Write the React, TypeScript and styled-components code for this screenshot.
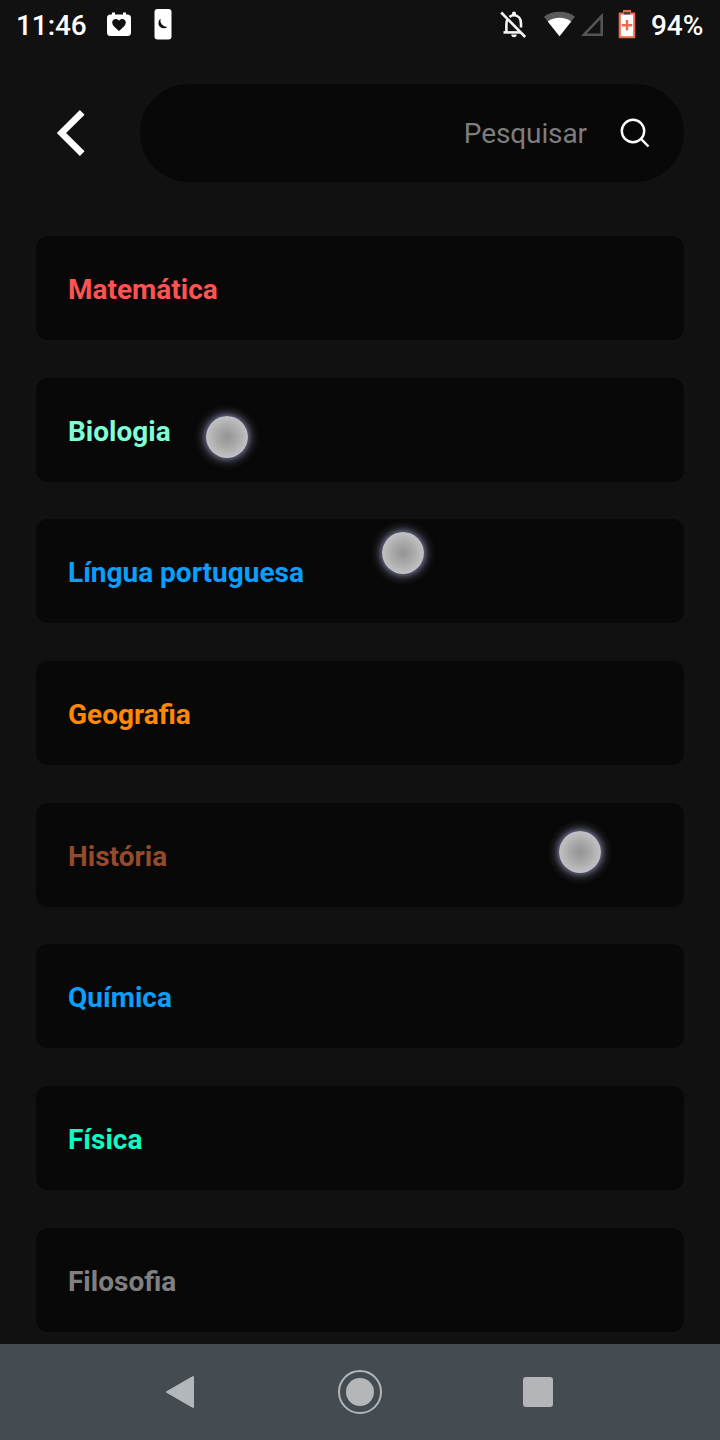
import React from 'react';
import styled, { createGlobalStyle } from 'styled-components';

const GlobalStyle = createGlobalStyle`
  * { box-sizing: border-box; }
  html, body { margin: 0; padding: 0; background: #111111; }
  body { font-family: Roboto, "Noto Sans", sans-serif; overflow: hidden; }
  svg { display: block; flex: none; }
`;

const Screen = styled.div`
  position: relative;
  display: flex;
  flex-direction: column;
  width: 720px;
  height: 1440px;
  background: #111111;
  overflow: hidden;
`;

const StatusBar = styled.header`
  display: flex;
  align-items: flex-start;
  justify-content: space-between;
  height: 48px;
  padding: 0 17px 0 16px;
  flex: none;
`;

const StatusGroup = styled.div`
  display: flex;
  align-items: flex-start;
`;

const StatusText = styled.span`
  font-size: 28px;
  font-weight: 500;
  line-height: 33px;
  padding-top: 9px;
  color: #ffffff;
  white-space: nowrap;
`;

const Clock = styled(StatusText)`
  width: 86px;
  letter-spacing: -0.1px;
`;

const Battery = styled(StatusText)`
  width: 52px;
  letter-spacing: -0.1px;
`;

const TopBar = styled.div`
  display: flex;
  align-items: center;
  height: 98px;
  margin-top: 36px;
  padding-right: 36px;
  flex: none;
`;

const BackButton = styled.button`
  width: 140px;
  height: 98px;
  padding: 0 0 0 52px;
  border: 0;
  background: none;
`;

const SearchBox = styled.div`
  display: flex;
  align-items: center;
  justify-content: flex-end;
  flex: 1;
  height: 98px;
  padding-right: 32px;
  border-radius: 49px;
  background: #080808;
`;

const SearchLabel = styled.span`
  margin-right: 31px;
  padding-top: 2px;
  font-size: 28px;
  line-height: 34px;
  letter-spacing: -0.1px;
  color: #7d7d7d;
`;

const SubjectList = styled.main`
  display: flex;
  flex-direction: column;
  gap: 37.7px;
  flex: 1;
  min-height: 0;
  padding: 54px 36px 0;
  overflow: hidden;
`;

const SubjectCard = styled.div<{ $color: string }>`
  display: flex;
  align-items: center;
  flex: none;
  height: 104px;
  padding: 4px 32px 0;
  border-radius: 12px;
  background: #080808;
  color: ${({ $color }) => $color};
  font-size: 28px;
  font-weight: 700;
  line-height: 34px;
`;

const NavBar = styled.nav`
  display: flex;
  align-items: center;
  justify-content: space-between;
  height: 96px;
  padding: 0 160px;
  flex: none;
  background: #444b51;
`;

const TouchDot = styled.i<{ $x: number; $y: number }>`
  position: absolute;
  left: ${({ $x }) => $x - 21}px;
  top: ${({ $y }) => $y - 21}px;
  width: 42px;
  height: 42px;
  border-radius: 50%;
  background: radial-gradient(circle closest-side, #949494 0%, #a9a9a9 50%, #bdbdbf 90%, #c2c2cc 100%);
  box-shadow: 0 0 4px 1px rgba(120, 120, 165, 0.7), 0 0 9px 4px rgba(125, 125, 150, 0.55);
`;

const subjects = [
  { name: 'Matemática', color: '#ff5252' },
  { name: 'Biologia', color: '#7fffd4' },
  { name: 'Língua portuguesa', color: '#0a9ffc' },
  { name: 'Geografia', color: '#ff8800' },
  { name: 'História', color: '#944b2c' },
  { name: 'Química', color: '#0a9ffc' },
  { name: 'Física', color: '#0cfcc8' },
  { name: 'Filosofia', color: '#808080' },
];

const touches = [
  { x: 227, y: 437 },
  { x: 403, y: 553 },
  { x: 580, y: 852 },
];

const NotificationIcons = () => (
  <svg width="76" height="48" viewBox="102 0 76 48">
    <path fill="#fff" d="M112 12.500h3v2h8v-2h3v2h1.500a3.500 3.500 0 0 1 3.500 3.500v14.500a3.500 3.500 0 0 1-3.500 3.500h-17a3.500 3.500 0 0 1-3.500-3.500V18a3.500 3.500 0 0 1 3.500-3.500h1.500z" />
    <path fill="#111" d="M119 31l-1.200-1.100c-3.600-3.200-5.600-5-5.600-7.400 0-2 1.600-3.400 3.500-3.400 1.300 0 2.500.6 3.300 1.700.8-1.100 2-1.700 3.300-1.700 1.900 0 3.500 1.400 3.500 3.400 0 2.400-2 4.200-5.600 7.400z" />
    <rect x="154.500" y="9" width="17" height="30.500" rx="3" fill="#fff" />
    <path fill="#111" d="M160.500 18.700a5.400 5.400 0 1 0 6.900 8.300 6.800 6.800 0 0 1-6.900-8.300z" />
  </svg>
);

const SystemIcons = () => (
  <svg width="156" height="48" viewBox="495 0 156 48">
    <g fill="none" stroke="#f4f4f4" strokeWidth="2.600">
      <path d="M501.200 12.500l24 24.500" />
      <path d="M507.500 19.500c-.8 1.400-1.100 3-1.100 4.800v8.200" />
      <path d="M503.500 32.400h17" />
      <path d="M509.500 17c1.200-1.100 2.700-1.700 4.500-1.700 4.300 0 7 3.400 7 8.200v4" />
    </g>
    <path fill="#f4f4f4" d="M512 15v-1.500a2 2 0 0 1 4 0V15zM511.300 34.500h5.400a2.700 2.700 0 0 1-5.400 0z" />
    <path fill="#5b5b5b" d="M559.500 36.300L544 16.700c4-3.200 9.400-4.900 15.500-4.900s11.500 1.700 15.500 4.900z" />
    <path fill="#fff" d="M559.500 36.300L547.800 21.500c3.200-2.400 7.200-3.700 11.700-3.700s8.500 1.300 11.700 3.700z" />
    <path fill="none" stroke="#555" strokeWidth="2.600" d="M601.700 16V34.700h-17.700z" />
    <path fill="#ee6a4c" d="M623 10h8v2.500h3.500a.8.800 0 0 1 .8.800v24.200a.8.800 0 0 1-.8.800h-15a.8.800 0 0 1-.8-.8V13.300a.8.800 0 0 1 .8-.8h3.500z" />
    <path fill="#fff" d="M620.800 14.500h12.400v21.700h-12.400z" />
    <path fill="#444" d="M623.800 12h6.400v2.500h-6.400z" />
    <path stroke="#ee6a4c" strokeWidth="2.400" d="M627 20v10.500M621.800 25.200h10.400" />
  </svg>
);

export default function App() {
  return (
    <>
      <GlobalStyle />
      <Screen>
        <StatusBar>
          <StatusGroup>
            <Clock>11:46</Clock>
            <NotificationIcons />
          </StatusGroup>
          <StatusGroup>
            <SystemIcons />
            <Battery>94%</Battery>
          </StatusGroup>
        </StatusBar>
        <TopBar>
          <BackButton aria-label="Voltar">
            <svg width="40" height="52" viewBox="52 107 40 52" fill="none" stroke="#fff" strokeWidth="6.600">
              <path d="M82.200 112.300L61.500 133l20.700 20.700" />
            </svg>
          </BackButton>
          <SearchBox>
            <SearchLabel>Pesquisar</SearchLabel>
            <svg width="34" height="34" viewBox="618 116 34 34" fill="none" stroke="#fff" strokeWidth="2.400">
              <circle cx="633" cy="131" r="11.200" />
              <path d="M641.200 139.200l7.300 7.300" />
            </svg>
          </SearchBox>
        </TopBar>
        <SubjectList>
          {subjects.map(({ name, color }) => (
            <SubjectCard key={name} $color={color}>{name}</SubjectCard>
          ))}
        </SubjectList>
        <NavBar>
          <svg width="44" height="44" viewBox="160 1370 44 44">
            <path d="M167 1392l26-15v30z" fill="#b3b7ba" stroke="#b3b7ba" strokeWidth="2" strokeLinejoin="round" />
          </svg>
          <svg width="44" height="44" viewBox="0 0 44 44">
            <circle cx="22" cy="22" r="21" fill="none" stroke="#b3b7ba" strokeWidth="2" />
            <circle cx="22" cy="22" r="14" fill="#b3b7ba" />
          </svg>
          <svg width="44" height="44" viewBox="0 0 44 44">
            <rect x="7" y="7" width="30" height="30" rx="3" fill="#b3b5b8" />
          </svg>
        </NavBar>
        {touches.map(({ x, y }) => (
          <TouchDot key={y} $x={x} $y={y} />
        ))}
      </Screen>
    </>
  );
}
